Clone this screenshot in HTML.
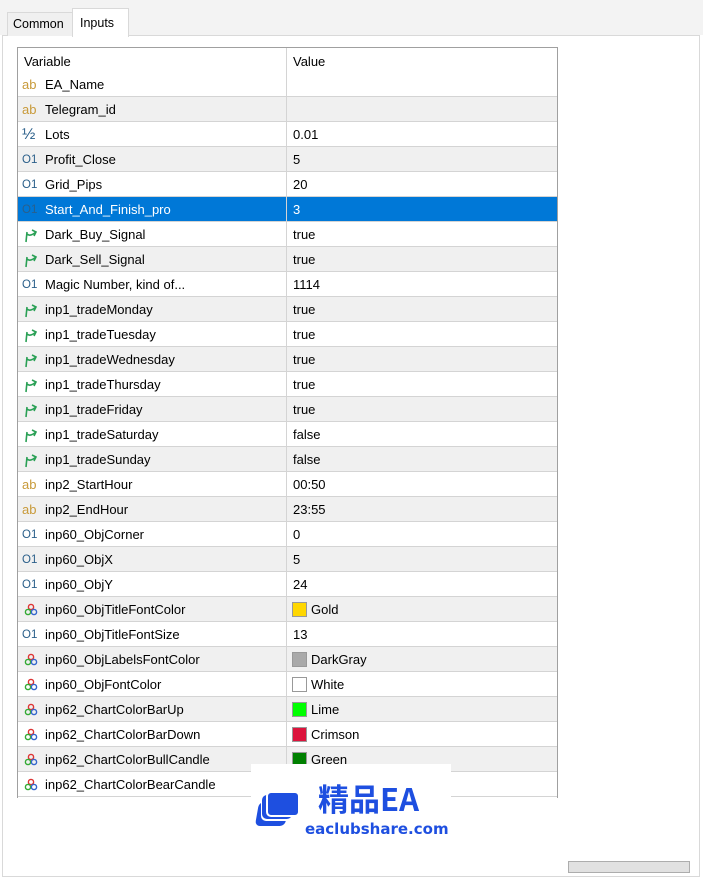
<!DOCTYPE html><html><head><style>
body{margin:0;width:703px;height:869px;background:#fff;font-family:"Liberation Sans",sans-serif;font-size:13px;color:#000;position:relative;overflow:hidden}
.top{position:absolute;left:0;top:0;width:703px;height:35px;background:#f3f3f3}
.tab{position:absolute;border:1px solid #d9d9d9;border-bottom:none;padding-left:5px;line-height:22px;font-size:12.5px}
.panel{position:absolute;left:2px;top:35px;width:696px;height:840px;border:1px solid #d9d9d9;background:#fff}
.tbl{position:absolute;left:17px;top:47px;width:539px;height:750px;border:1px solid #a0a0a0;border-bottom:none}
.r{position:absolute;left:18px;width:539px;height:24px;border-bottom:1px solid #d4d4d4;line-height:26px}
.g{background:#f0f0f0}.s{background:#0078d7;color:#fff}
.c1{position:absolute;left:27px}.c2{position:absolute;left:274px}
.div{position:absolute;left:286px;top:48px;width:1px;height:749px;background:#d4d4d4}
.ic{position:absolute;left:4px;width:18px;font-size:13px}
.ab{color:#c89a3a}.o1{color:#2a5f8a;font-size:11.5px}
.c2 .sw{position:absolute;left:0;top:5px;width:13px;height:13px;border:1px solid #999}
.c2 .t{position:absolute;left:19px;white-space:nowrap}
.c2 .p{position:absolute;left:1px;white-space:nowrap}
</style></head><body>
<div class="top"></div>
<div class="panel"></div>
<div class="tab" style="left:7px;top:12px;width:60px;height:23px;background:#f0f0f0">Common</div>
<div class="tab" style="left:72px;top:8px;width:48px;height:28px;background:#fff;line-height:28px;padding-left:7px">Inputs</div>
<div class="tbl"></div>
<div class="r" style="top:48px;border-bottom:none;line-height:28px"><span class="c1" style="left:6px">Variable</span><span class="c2" style="left:275px">Value</span></div>
<div id="rows"></div>
<div class="div"></div>
<div style="position:absolute;left:251px;top:764px;width:200px;height:77px;background:#fff"></div>
<div style="position:absolute;left:257px;top:790px;width:42px;height:40px">
<div style="position:absolute;left:0;top:12px;width:30px;height:24px;border-radius:5px;background:#1e4fe0;transform:skewX(-10deg)"></div>
<div style="position:absolute;left:4px;top:7px;width:30px;height:24px;border-radius:5px;background:#fff"></div>
<div style="position:absolute;left:5px;top:5px;width:30px;height:24px;border-radius:5px;background:#1e4fe0"></div>
<div style="position:absolute;left:9px;top:1px;width:30px;height:22px;border-radius:5px;background:#1e4fe0;border:2px solid #fff"></div></div>
<div style="position:absolute;left:318px;top:778px;font-family:'Noto Sans CJK SC',sans-serif;font-weight:bold;font-size:31px;color:#1e4fe0;line-height:40px">精品EA</div>
<div style="position:absolute;left:305px;top:820px;font-family:'DejaVu Sans',sans-serif;font-weight:bold;font-size:15px;color:#1e4fe0">eaclubshare.com</div>
<div style="position:absolute;left:568px;top:861px;width:120px;height:10px;background:#e1e1e1;border:1px solid #adadad"></div>
<script>
var d=[["ab","EA_Name",""],["ab","Telegram_id",""],["h","Lots","0.01"],["o","Profit_Close","5"],["o","Grid_Pips","20"],["o","Start_And_Finish_pro","3"],["a","Dark_Buy_Signal","true"],["a","Dark_Sell_Signal","true"],["o","Magic Number, kind of...","1114"],["a","inp1_tradeMonday","true"],["a","inp1_tradeTuesday","true"],["a","inp1_tradeWednesday","true"],["a","inp1_tradeThursday","true"],["a","inp1_tradeFriday","true"],["a","inp1_tradeSaturday","false"],["a","inp1_tradeSunday","false"],["ab","inp2_StartHour","00:50"],["ab","inp2_EndHour","23:55"],["o","inp60_ObjCorner","0"],["o","inp60_ObjX","5"],["o","inp60_ObjY","24"],["c","inp60_ObjTitleFontColor","Gold","#ffd700"],["o","inp60_ObjTitleFontSize","13"],["c","inp60_ObjLabelsFontColor","DarkGray","#a9a9a9"],["c","inp60_ObjFontColor","White","#fff"],["c","inp62_ChartColorBarUp","Lime","#00ff00"],["c","inp62_ChartColorBarDown","Crimson","#dc143c"],["c","inp62_ChartColorBullCandle","Green","#008000"],["c","inp62_ChartColorBearCandle","",""]];
var arrow='<svg class="ic" style="top:5px" width="16" height="16" viewBox="0 0 16 16"><path d="M3 15 L4 5 M4 7 Q7 10 13 5 M9 3 L13 5 L11 9" fill="none" stroke="#2aa055" stroke-width="1.6"/></svg>';
var col='<svg class="ic" style="top:6px" width="14" height="14" viewBox="0 0 14 14"><circle cx="7" cy="4" r="2.6" fill="none" stroke="#d33" stroke-width="1.4"/><circle cx="4" cy="9" r="2.6" fill="none" stroke="#3a3" stroke-width="1.4"/><circle cx="10" cy="9" r="2.6" fill="none" stroke="#36c" stroke-width="1.4"/></svg>';
var h="";d.forEach(function(r,i){var cls=i==5?"r s":(i%2?"r g":"r");var ic="";
if(r[0]=="ab")ic='<span class="ic ab">ab</span>';else if(r[0]=="o")ic='<span class="ic o1">O1</span>';else if(r[0]=="h")ic='<span class="ic" style="color:#2a5f8a;font-size:16px">½</span>';else if(r[0]=="a")ic=arrow;else ic=col;
var v=r[0]=="c"&&r[3]?'<span class="sw" style="background:'+r[3]+'"></span><span class="t">'+r[2]+'</span>':'<span class="p">'+r[2]+'</span>';
h+='<div class="'+cls+'" style="top:'+(72+25*i)+'px">'+ic+'<span class="c1">'+r[1]+'</span><span class="c2">'+v+'</span></div>';});
document.getElementById("rows").innerHTML=h;
</script>
</body></html>
